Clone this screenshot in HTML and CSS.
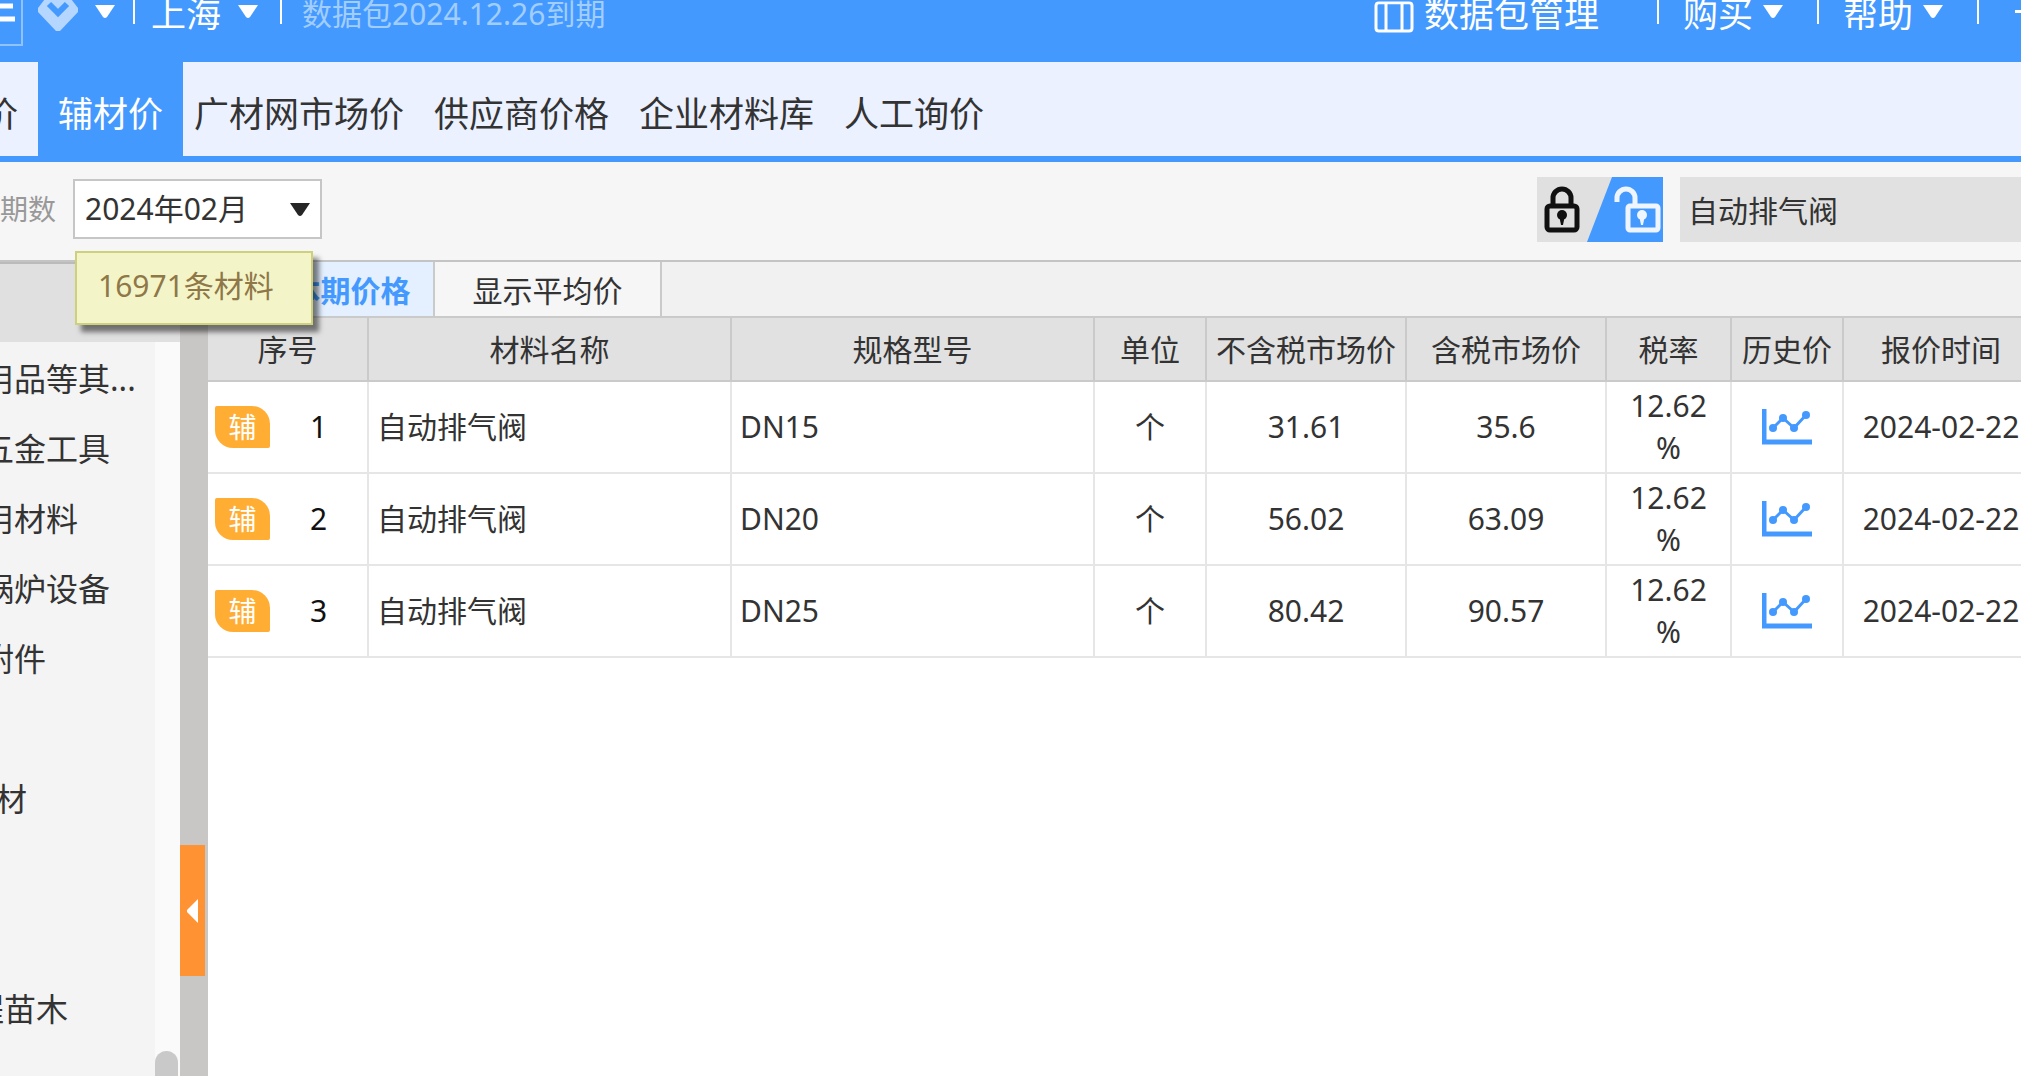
FILE: index.html
```html
<!DOCTYPE html>
<html lang="zh-CN">
<head>
<meta charset="utf-8">
<title>辅材价</title>
<link rel="stylesheet" href="styles.css">
</head>
<body>
<div class="app">
  <header class="topbar">
    <button class="menu-btn" aria-label="菜单"><svg width="20" height="52" viewBox="0 0 20 52"><path d="M0 14h13M0 27h15" stroke="#fff" stroke-width="5"/></svg></button>
    <button class="fav" aria-label="收藏">
      <svg width="40" height="40" viewBox="0 0 40 40"><path d="M10 3h20l10 13v4L22 39h-4L0 20v-4z" fill="#b4d6ff"/><path d="M11 12l9 9 9-9" fill="none" stroke="#4499ff" stroke-width="6"/></svg>
      <svg class="caret" width="20" height="13" viewBox="0 0 20 13"><path d="M0 0h20L12 12q-2 2-4 0z"/></svg>
    </button>
    <span class="sep"></span>
    <button class="city">上海 <svg class="caret" width="20" height="13" viewBox="0 0 20 13"><path d="M0 0h20L12 12q-2 2-4 0z"/></svg></button>
    <span class="sep"></span>
    <span class="expiry">数据包2024.12.26到期</span>
    <div class="actions">
      <button class="manage"><svg width="40" height="34" viewBox="0 0 40 34"><path d="M2 6q0-3 3-3h30q3 0 3 3v24q0 3-3 3H5q-3 0-3-3zM12 3v30M28 3v30" fill="none" stroke="#fff" stroke-width="3" transform="translate(0 1) scale(1 .94)"/></svg>数据包管理</button>
      <span class="sep"></span>
      <button>购买 <svg class="caret" width="20" height="13" viewBox="0 0 20 13"><path d="M0 0h20L12 12q-2 2-4 0z"/></svg></button>
      <span class="sep"></span>
      <button>帮助 <svg class="caret" width="20" height="13" viewBox="0 0 20 13"><path d="M0 0h20L12 12q-2 2-4 0z"/></svg></button>
      <span class="sep"></span>
      <button class="minimize" aria-label="最小化"></button>
    </div>
  </header>

  <nav class="tabs">
    <a href="#" class="tab tab-cut">价</a>
    <a href="#" class="tab active">辅材价</a>
    <div class="tab-group">
      <a href="#" class="tab">广材网市场价</a>
      <a href="#" class="tab">供应商价格</a>
      <a href="#" class="tab">企业材料库</a>
      <a href="#" class="tab">人工询价</a>
    </div>
  </nav>

  <div class="toolbar">
    <label for="period">期数</label>
    <div class="picker">
      <select id="period"><option>2024年02月</option></select>
      <svg class="picker-caret" width="20" height="13" viewBox="0 0 20 13"><path d="M0 0h20L12 12q-2 2-4 0z" fill="#262626"/></svg>
      <div class="tooltip" role="tooltip">16971条材料</div>
    </div>
    <div class="search">
      <button class="lock" aria-label="锁定">
        <svg width="126" height="65" viewBox="0 0 126 65">
          <path d="M75 0h51v65H50z" fill="#4499ff"/>
          <g fill="none" stroke="#111" stroke-width="5"><rect x="10" y="29" width="30" height="24" rx="3"/><path d="M16 29V21a9 9 0 0 1 18 0v8"/></g>
          <circle cx="25" cy="38" r="5" fill="#111"/><path d="M22 38h6l-2 10h-2z" fill="#111"/>
          <g fill="none" stroke="#eef5ff" stroke-width="5"><rect x="91" y="29" width="30" height="24" rx="2"/><path d="M80 25V21a9 9 0 0 1 18 0v8"/></g>
          <circle cx="105" cy="38" r="5" fill="#eef5ff"/><path d="M102 38h6l-2 10h-2z" fill="#eef5ff"/>
        </svg>
      </button>
      <input class="keyword" type="text" value="自动排气阀" aria-label="关键字">
    </div>
  </div>

  <div class="body">
    <aside class="sidebar">
      <div class="side-head"></div>
      <div class="side-main">
        <ul class="tree">
          <li>用品等其...</li>
          <li>五金工具</li>
          <li>用材料</li>
          <li>锅炉设备</li>
          <li>附件</li>
          <li></li>
          <li class="near">材</li>
          <li></li>
          <li></li>
          <li class="far">程苗木</li>
        </ul>
        <div class="track"><div class="thumb"></div></div>
      </div>
    </aside>
    <div class="divider">
      <button class="collapse" aria-label="收起"><svg width="11" height="24" viewBox="0 0 11 24"><path d="M11 0v24L0 13v-2z" fill="#fff"/></svg></button>
    </div>
    <main class="content">
      <div class="views">
        <button class="view selected">显示本期价格</button>
        <button class="view">显示平均价</button>
      </div>
      <table class="grid">
        <colgroup><col class="c-no"><col class="c-name"><col class="c-name"><col class="c-unit"><col class="c-price"><col class="c-price"><col class="c-rate"><col class="c-unit"><col class="c-date"></colgroup>
        <thead>
          <tr><th>序号</th><th>材料名称</th><th>规格型号</th><th>单位</th><th>不含税市场价</th><th>含税市场价</th><th>税率</th><th>历史价</th><th>报价时间</th></tr>
        </thead>
        <tbody>
          <tr><td><div class="no"><span class="badge">辅</span><span class="num">1</span></div></td><td class="left">自动排气阀</td><td class="left">DN15</td><td>个</td><td>31.61</td><td>35.6</td><td>12.62<br>%</td><td><a href="#" aria-label="历史价"><svg width="50" height="36" viewBox="0 0 50 36"><path d="M2 0v33h48" fill="none" stroke="#4499ff" stroke-width="5"/><path d="M11 19L21 9l11 10L44 6" fill="none" stroke="#4499ff" stroke-width="3"/><g fill="#4499ff"><circle cx="11" cy="19" r="4"/><circle cx="21" cy="9" r="4"/><circle cx="32" cy="19" r="4"/><circle cx="44" cy="6" r="4"/></g></svg></a></td><td>2024-02-22</td></tr>
          <tr><td><div class="no"><span class="badge">辅</span><span class="num">2</span></div></td><td class="left">自动排气阀</td><td class="left">DN20</td><td>个</td><td>56.02</td><td>63.09</td><td>12.62<br>%</td><td><a href="#" aria-label="历史价"><svg width="50" height="36" viewBox="0 0 50 36"><path d="M2 0v33h48" fill="none" stroke="#4499ff" stroke-width="5"/><path d="M11 19L21 9l11 10L44 6" fill="none" stroke="#4499ff" stroke-width="3"/><g fill="#4499ff"><circle cx="11" cy="19" r="4"/><circle cx="21" cy="9" r="4"/><circle cx="32" cy="19" r="4"/><circle cx="44" cy="6" r="4"/></g></svg></a></td><td>2024-02-22</td></tr>
          <tr><td><div class="no"><span class="badge">辅</span><span class="num">3</span></div></td><td class="left">自动排气阀</td><td class="left">DN25</td><td>个</td><td>80.42</td><td>90.57</td><td>12.62<br>%</td><td><a href="#" aria-label="历史价"><svg width="50" height="36" viewBox="0 0 50 36"><path d="M2 0v33h48" fill="none" stroke="#4499ff" stroke-width="5"/><path d="M11 19L21 9l11 10L44 6" fill="none" stroke="#4499ff" stroke-width="3"/><g fill="#4499ff"><circle cx="11" cy="19" r="4"/><circle cx="21" cy="9" r="4"/><circle cx="32" cy="19" r="4"/><circle cx="44" cy="6" r="4"/></g></svg></a></td><td>2024-02-22</td></tr>
        </tbody>
      </table>
    </main>
  </div>
</div>
</body>
</html>
```
FILE: styles.css
```css
* { box-sizing: border-box; }

body {
  margin: 0;
  color: #333;
  font: 30px/42px "Noto Sans", "Noto Sans CJK SC", sans-serif;
}

button, input, select {
  margin: 0;
  padding: 0;
  border: 0;
  border-radius: 0;
  background: none;
  color: inherit;
  font: inherit;
}

svg { display: block; flex: none; }
a { color: inherit; text-decoration: none; }

.app {
  display: flex;
  flex-direction: column;
  height: 100vh;
  overflow: hidden;
  background: #fff;
}

/* Title bar */
.topbar {
  display: flex;
  flex: none;
  align-items: flex-start;
  height: 62px;
  background: #4499ff;
  color: #fff;
  font-size: 35px;
  white-space: nowrap;
}
.topbar button {
  display: flex;
  align-items: flex-start;
  height: 44px;
  margin-top: -8px;
  line-height: 44px;
}
.topbar .menu-btn {
  width: 23px;
  height: 54px;
  border: solid #8fc2ff;
  border-width: 0 2px 2px 0;
}
.topbar .fav { gap: 17px; margin-left: 15px; }
.caret { margin-top: 13px; fill: #fff; }
.sep {
  width: 2px;
  height: 24px;
  background: #fff;
}
.topbar .fav + .sep { margin-left: 18px; }
.topbar .city { gap: 17px; margin: -8px 22px 0 16px; }
.expiry {
  margin: -8px 0 0 20px;
  color: #a2ceff;
  font-size: 30px;
  line-height: 44px;
}
.actions { display: flex; margin-left: auto; }
.actions .manage { gap: 10px; margin-right: 58px; }
.manage svg { margin-top: 7px; }
.actions button { gap: 10px; }
.actions .sep + button { margin-left: 24px; margin-right: 34px; }
.actions .sep + .minimize {
  width: 6px;
  height: 3px;
  margin: 10px 0 0 36px;
  background: #fff;
}

/* Price source tabs */
.tabs {
  display: flex;
  flex: none;
  height: 100px;
  border-bottom: 6px solid #4499ff;
  background: #ebf1ff;
  font-size: 35px;
  line-height: 104px;
  white-space: nowrap;
}
.tab-cut { margin-left: -17px; padding-right: 20px; }
.tab.active { padding: 0 20px; background: #4499ff; color: #fff; }
.tab-group { display: flex; gap: 30px; padding-left: 11px; }

/* Filter bar */
.toolbar {
  display: flex;
  flex: none;
  align-items: center;
  height: 100px;
  padding-bottom: 4px;
  border-bottom: 2px solid #c4c4c4;
  background: #f6f6f6;
}
.toolbar label {
  width: 73px;
  color: #999;
  font-size: 28px;
}
.picker { position: relative; display: grid; width: 249px; align-items: center; }
.picker select, .picker-caret { grid-area: 1 / 1; }
.picker select {
  height: 60px;
  padding-left: 10px;
  border: 2px solid #c6c6c6;
  background: #fff;
  appearance: none;
}
.picker-caret { justify-self: end; margin-right: 12px; pointer-events: none; }
.tooltip {
  position: absolute;
  z-index: 2;
  top: 72px;
  left: 2px;
  width: 238px;
  height: 74px;
  padding-left: 21px;
  border: 2px solid #cfd07c;
  background: #f3f5c9;
  box-shadow: 6px 7px 5px rgba(0, 0, 0, .5);
  color: #8f7748;
  line-height: 66px;
}
.search { display: flex; gap: 17px; margin-left: auto; }
.lock { width: 126px; height: 65px; background: #e0e0e0; }
.keyword {
  width: 341px;
  height: 65px;
  padding-left: 8px;
  background: #e1e1e1;
}

/* Category tree */
.body { display: flex; flex: 1; min-height: 0; }
.sidebar {
  display: flex;
  flex: none;
  flex-direction: column;
  width: 180px;
  overflow: hidden;
}
.side-head { height: 80px; flex: none; border-top: 2px solid #bbb; background: #e0e0e0; }
.side-main { display: flex; flex: 1; min-height: 0; background: #f4f4f4; }
.tree {
  flex: 1;
  min-width: 0;
  margin: 0;
  padding: 2px 0 0;
  overflow: hidden;
  list-style: none;
  font-size: 32px;
  line-height: 70px;
  white-space: nowrap;
}
.tree li { height: 70px; margin-left: -18px; }
.tree .near { margin-left: -5px; }
.tree .far { margin-left: -28px; }
.track {
  display: flex;
  flex: none;
  flex-direction: column;
  width: 25px;
  padding-right: 2px;
  background: #fafafa;
}
.thumb {
  height: 25px;
  margin-top: auto;
  border-radius: 12px 12px 0 0;
  background: #c9c9c9;
}

/* Splitter between tree and grid */
.divider {
  display: flex;
  flex: none;
  flex-direction: column;
  width: 28px;
  background: #c8c7c6;
}
.divider::before { content: ""; flex: 35; }
.divider::after { content: ""; flex: 6; }
.collapse {
  display: flex;
  align-items: center;
  justify-content: center;
  width: 25px;
  height: 131px;
  background: #ff9233;
}

/* Price grid */
.content { flex: 1; min-width: 0; overflow: hidden; }
.views {
  display: flex;
  height: 56px;
  border-bottom: 2px solid #cacaca;
  background: #f1f1f1;
}
.view {
  width: 227px;
  padding-top: 4px;
  border-right: 2px solid #cacaca;
  background: #f6f6f6;
}
.view.selected { background: #e4f0ff; color: #4499ff; font-weight: 700; }

.grid {
  width: 1832px;
  border-spacing: 0;
  table-layout: fixed;
  white-space: nowrap;
}
.c-no { width: 161px; }
.c-name { width: 363px; }
.c-unit { width: 112px; }
.c-price { width: 200px; }
.c-rate { width: 125px; }
.c-date { width: 196px; }
.grid th {
  height: 64px;
  padding: 2px 0 0;
  border: solid #cacaca;
  border-width: 0 2px 2px 0;
  background: #e1e1e1;
  font-weight: 400;
}
.grid td {
  height: 92px;
  padding: 0;
  border: solid #e6e6e6;
  border-width: 0 2px 2px 0;
  text-align: center;
}
.grid td.left { padding-left: 8px; text-align: left; }
.grid td svg { margin: 0 auto; }
.no { display: flex; align-items: center; padding-left: 7px; }
.badge {
  width: 55px;
  height: 42px;
  border-radius: 2px 18px 2px 18px;
  background: #ffad33;
  color: #fff;
  font-size: 28px;
}
.num { width: 97px; color: #111; }
```
